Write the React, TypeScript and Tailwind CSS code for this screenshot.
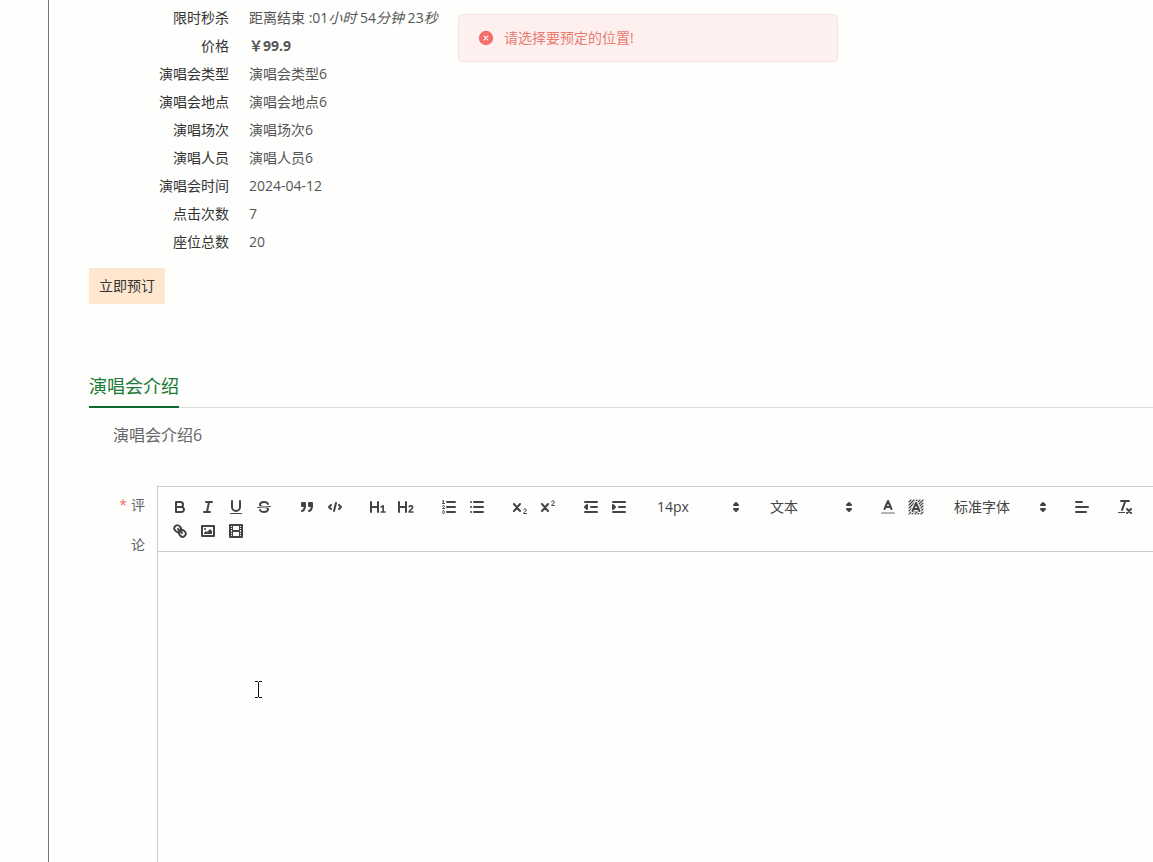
import type { ReactNode } from "react";

const details = [
  { label: "演唱会类型", value: "演唱会类型6" },
  { label: "演唱会地点", value: "演唱会地点6" },
  { label: "演唱场次", value: "演唱场次6" },
  { label: "演唱人员", value: "演唱人员6" },
  { label: "演唱会时间", value: "2024-04-12" },
  { label: "点击次数", value: "7" },
  { label: "座位总数", value: "20" },
];

function Row({ label, children }: { label: string; children: ReactNode }) {
  return (
    <div className="flex gap-5">
      <dt className="w-[140px] shrink-0 text-right text-[#333]">{label}</dt>
      <dd className="text-[#555]">{children}</dd>
    </div>
  );
}

function Icon({ children }: { children: ReactNode }) {
  return (
    <svg
      viewBox="0 0 18 18"
      className="size-[18px]"
      fill="none"
      stroke="#444"
      strokeWidth="2"
      strokeLinecap="round"
      strokeLinejoin="round"
      aria-hidden="true"
    >
      {children}
    </svg>
  );
}

function Tool({ label, children }: { label: string; children: ReactNode }) {
  return (
    <button type="button" aria-label={label} className="flex h-6 w-7 items-center px-[5px]">
      <Icon>{children}</Icon>
    </button>
  );
}

function Group({ children }: { children: ReactNode }) {
  return <div className="flex">{children}</div>;
}

function Picker({ label, options, wide }: { label: string; options: string[]; wide?: boolean }) {
  return (
    <div className={`relative h-6 ${wide ? "w-[108px]" : "w-[98px]"}`}>
      <select
        aria-label={label}
        className="h-6 w-full appearance-none bg-transparent pl-[9px] text-sm leading-6 text-[#444] outline-none"
      >
        {options.map((o) => (
          <option key={o}>{o}</option>
        ))}
      </select>
      <span className="pointer-events-none absolute right-px top-[3px]">
        <Icon>
          <polygon points="7 11 9 13 11 11 7 11" fill="#444" />
          <polygon points="7 7 9 5 11 7 7 7" fill="#444" />
        </Icon>
      </span>
    </div>
  );
}

function Toolbar() {
  return (
    <div className="flex flex-wrap gap-x-[15px] border-b border-[#ccc] p-2">
      <Group>
        <Tool label="加粗">
          <path d="M5,4H9.5A2.5,2.5,0,0,1,12,6.5v0A2.5,2.5,0,0,1,9.5,9H5V4Z" />
          <path d="M5,9h5.5A2.5,2.5,0,0,1,13,11.5v0A2.5,2.5,0,0,1,10.5,14H5V9Z" />
        </Tool>
        <Tool label="斜体">
          <path d="M7 4H13M5 14H11M8 14L10 4" />
        </Tool>
        <Tool label="下划线">
          <path d="M5,3V9a4.012,4.012,0,0,0,4,4H9a4.012,4.012,0,0,0,4-4V3" />
          <rect x="3" y="15" width="12" height="1" rx=".5" fill="#444" stroke="none" />
        </Tool>
        <Tool label="删除线">
          <path d="M15.5 8.5L2.5 9.5" strokeWidth="1" />
          <g fill="#444" stroke="none">
            <path d="M9.007,8C6.542,7.791,6,7.519,6,6.5,6,5.792,7.283,5,9,5c1.571,0,2.765.679,2.969,1.309a1,1,0,0,0,1.9-.617C13.356,4.106,11.354,3,9,3,6.2,3,4,4.538,4,6.5a3.2,3.2,0,0,0,.5,1.843Z" />
            <path d="M8.984,10C11.457,10.208,12,10.479,12,11.5c0,.708-1.283,1.5-3,1.5-1.571,0-2.765-.679-2.969-1.309a1,1,0,1,0-1.9.617C4.644,13.894,6.646,15,9,15c2.8,0,5-1.538,5-3.5a3.2,3.2,0,0,0-.5-1.843Z" />
          </g>
        </Tool>
      </Group>
      <Group>
        <Tool label="引用">
          <g fill="#444">
            <rect x="4" y="5" width="3" height="3" />
            <rect x="11" y="5" width="3" height="3" />
            <path d="M7,8c0,4.031-3,5-3,5" />
            <path d="M14,8c0,4.031-3,5-3,5" />
          </g>
        </Tool>
        <Tool label="代码">
          <path d="M5 7L3 9L5 11M13 7L15 9L13 11M10 5L8 13" />
        </Tool>
      </Group>
      <Group>
        <Tool label="标题1">
          <path d="M2 4V14M9 4V14M2 9H9" />
          <path d="M12.2 9L14.2 7.8V14M12.2 14H16" strokeWidth="1.6" />
        </Tool>
        <Tool label="标题2">
          <path d="M2 4V14M9 4V14M2 9H9" />
          <path d="M12.2 8.6C13.4 7.2 15.8 7.8 15.6 9.5C15.4 11.2 12.2 12 12.1 14H16" strokeWidth="1.6" />
        </Tool>
      </Group>
      <Group>
        <Tool label="有序列表">
          <path d="M7 4H15M7 9H15M7 14H15" />
          <g strokeWidth="1">
            <path d="M2.5 5.5H4.5M2.5 2.9L3.5 2.5V5.5" />
            <path d="M4.5,10.5h-2c0-.234,1.85-1.076,1.85-2.234A.959.959,0,0,0,2.5,8.156" />
            <path d="M2.5,14.846a.959.959,0,0,0,1.85-.109A.7.7,0,0,0,3.75,14a.688.688,0,0,0,.6-.736.959.959,0,0,0-1.85-.109" />
          </g>
        </Tool>
        <Tool label="无序列表">
          <path d="M6 4H15M6 9H15M6 14H15M3 4V4M3 9V9M3 14V14" />
        </Tool>
      </Group>
      <Group>
        <Tool label="下标">
          <path d="M3 6L9 13M9 6L3 13" />
          <path d="M12.5 11.9C12.9 10.3 15.3 10.5 15.3 12C15.3 13.6 12.5 14.2 12.5 15.5H15.5" strokeWidth="1" />
        </Tool>
        <Tool label="上标">
          <path d="M3 6L9 13M9 6L3 13" />
          <path d="M12.5 3.9C12.9 2.3 15.3 2.5 15.3 4C15.3 5.6 12.5 6.2 12.5 7.5H15.5" strokeWidth="1" />
        </Tool>
      </Group>
      <Group>
        <Tool label="减少缩进">
          <path d="M3 14H15M3 4H15M9 9H15" />
          <polygon points="5 7 5 11 3 9" fill="#444" />
        </Tool>
        <Tool label="增加缩进">
          <path d="M3 14H15M3 4H15M9 9H15" />
          <polygon points="3 7 3 11 5 9" fill="#444" />
        </Tool>
      </Group>
      <Picker label="字号" options={["14px", "16px", "18px", "20px"]} />
      <Picker label="段落格式" options={["文本", "标题1", "标题2", "标题3"]} />
      <Group>
        <Tool label="文字颜色">
          <path d="M3 15H15" opacity=".4" />
          <path d="M5.5 11L9 3L12.5 11M6.38 9H11.63" />
        </Tool>
        <Tool label="背景颜色">
          <path
            d="M2 4L4 2M2 7L7 2M2 10L10 2M2 13L13 2M2 16L16 2M5 16L16 5M8 16L16 8M11 16L16 11M14 16L16 14"
            strokeWidth="1.1"
          />
          <path d="M5.5 13L9 5L12.5 13" stroke="#fefefd" strokeWidth="4" fill="#fefefd" />
          <path d="M5.5 13L9 5L12.5 13M6.38 11H11.63" />
        </Tool>
      </Group>
      <Picker label="字体" options={["标准字体", "宋体", "黑体"]} wide />
      <Tool label="对齐方式">
        <path d="M3 4H9M3 9H15M3 14H13" />
      </Tool>
      <Tool label="清除格式">
        <path d="M5 3H13M6 12L9.35 3M11 11L15 15M15 11L11 15" />
        <rect x="2" y="14" width="7" height="1" rx=".5" fill="#444" stroke="none" />
      </Tool>
      <Group>
        <Tool label="链接">
          <path d="M7 7L11 11" />
          <path d="M8.9,4.577a3.476,3.476,0,0,1,.36,4.679A3.476,3.476,0,0,1,4.577,8.9C3.185,7.5,2.035,6.4,4.217,4.217S7.5,3.185,8.9,4.577Z" />
          <path d="M13.423,9.1a3.476,3.476,0,0,0-4.679-.36,3.476,3.476,0,0,0,.36,4.679c1.392,1.392,2.5,2.542,4.679.36S14.815,10.5,13.423,9.1Z" />
        </Tool>
        <Tool label="图片">
          <rect x="3" y="4" width="12" height="10" />
          <g fill="#444" stroke="none">
            <circle cx="6" cy="7" r="1" />
            <polygon points="5 12 5 11 7 9 8 10 11 7 13 9 13 12" />
          </g>
        </Tool>
        <Tool label="视频">
          <rect x="3" y="3" width="12" height="12" />
          <path
            d="M5 3h1v12H5zM12 3h1v12h-1zM5 8h8v2H5zM3 5h3v1H3zM3 7h3v1H3zM3 10h3v1H3zM3 12h3v1H3zM12 5h3v1h-3zM12 7h3v1h-3zM12 10h3v1h-3zM12 12h3v1h-3z"
            fill="#444"
            stroke="none"
          />
        </Tool>
      </Group>
    </div>
  );
}

function Message() {
  return (
    <div
      role="alert"
      className="fixed left-[458px] top-3.5 flex h-12 w-[380px] items-center gap-2.5 rounded border border-[#f8e2e0] bg-[#fef0ef] pl-[19px] pr-5 text-sm text-[#e87c72]"
    >
      <svg viewBox="0 0 16 16" className="size-4" aria-hidden="true">
        <circle cx="8" cy="8" r="7.2" fill="#f4706a" />
        <path d="M6.2 6.2L9.8 9.8M9.8 6.2L6.2 9.8" stroke="#fff" strokeWidth="1.2" strokeLinecap="round" />
      </svg>
      <p>请选择要预定的位置!</p>
    </div>
  );
}

export default function App() {
  return (
    <div className="flex min-h-screen bg-[#fefefd] pl-12 font-['Open_Sans','Noto_Sans_CJK_SC',sans-serif] text-sm">
      <Message />
      <main className="flex min-w-0 flex-1 flex-col border-l border-[#777] pl-10 pt-1">
        <dl className="leading-7">
          <Row label="限时秒杀">
            距离结束 :01<i>小时</i> 54<i>分钟</i> 23<i>秒</i>
          </Row>
          <Row label="价格">
            <b>￥99.9</b>
          </Row>
          {details.map((d) => (
            <Row key={d.label} label={d.label}>
              {d.value}
            </Row>
          ))}
        </dl>
        <button type="button" className="mt-3 h-9 self-start bg-[#fee6cf] px-2.5 text-[#333]">
          立即预订
        </button>

        <section className="mt-16">
          <div className="flex h-10 border-b border-[#ddd]">
            <h2 className="h-10 border-b-2 border-[#0f6b2c] text-lg leading-9 text-[#1a7a35]">演唱会介绍</h2>
          </div>
          <p className="px-6 pt-[15px] text-base leading-6 text-[#666]">演唱会介绍6</p>
        </section>

        <form className="mt-[38px] flex flex-1">
          <label htmlFor="comment" className="w-[68px] shrink-0 pl-6 pr-3 text-right leading-10 text-[#606266]">
            <span className="mr-1 text-[#f56c6c]">*</span>评论
          </label>
          <div className="mt-px flex min-w-0 flex-1 flex-col border-l border-t border-[#ccc]">
            <Toolbar />
            <div className="relative flex min-h-[300px] flex-1">
              <textarea id="comment" className="flex-1 resize-none bg-transparent px-4 py-3 text-sm outline-none" />
              {/* text cursor */}
              <svg viewBox="0 0 9 17" className="pointer-events-none absolute left-24 top-[129px] h-[17px] w-[9px]" aria-hidden="true">
                <path d="M1 .5H4M5 .5H8M4.5 1V16M1 16.5H4M5 16.5H8" stroke="#111" fill="none" />
              </svg>
            </div>
          </div>
        </form>
      </main>
    </div>
  );
}
